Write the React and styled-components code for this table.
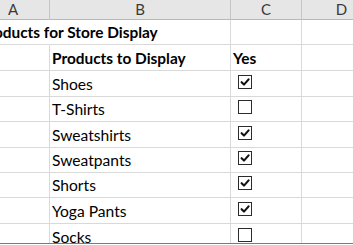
import React from "react";
import styled, { createGlobalStyle } from "styled-components";

const GlobalStyle = createGlobalStyle`
    html, body {
        margin: 0;
        padding: 0;
        background: #ffffff;
    }
    body {
        font-family: Lato, "Open Sans", sans-serif;
    }
`;

const products = [
    { name: "Shoes", shown: true },
    { name: "T-Shirts", shown: false },
    { name: "Sweatshirts", shown: true },
    { name: "Sweatpants", shown: true },
    { name: "Shorts", shown: true },
    { name: "Yoga Pants", shown: true },
    { name: "Socks", shown: false },
];

const rowHeights = [25, 26, 26, 25, 26, 25, 25, 26, 26];

function CheckBox({ checked }) {
    return (
        <Box>
            {checked && (
                <svg width="12" height="12" viewBox="0 0 12 12">
                    <path
                        d="M2.6 6.2 L5 8.6 L9.6 3.4"
                        fill="none"
                        stroke="#111"
                        strokeWidth="2.1"
                        strokeLinecap="round"
                        strokeLinejoin="round"
                    />
                </svg>
            )}
        </Box>
    );
}

export default function App() {
    const rows = [
        { a: "Products for Store Display", title: true },
        { b: "Products to Display", c: "Yes", bold: true },
        ...products.map((p) => ({ b: p.name, check: p.shown })),
    ];

    return (
        <>
            <GlobalStyle />
            <Viewport>
                <Sheet>
                    <HeaderCell>A</HeaderCell>
                    <HeaderCell>B</HeaderCell>
                    <HeaderCell>C</HeaderCell>
                    <HeaderCell $last>D</HeaderCell>
                    {rows.map((row, i) => {
                        const h = rowHeights[i];
                        return (
                            <React.Fragment key={i}>
                                <Cell $h={h} $open={row.title}>
                                    {row.a && <Title>{row.a}</Title>}
                                </Cell>
                                <Cell $h={h} $bold={row.bold}>
                                    {row.b}
                                </Cell>
                                <Cell $h={h} $bold={row.bold}>
                                    {row.c}
                                    {row.check !== undefined && (
                                        <CheckBox checked={row.check} />
                                    )}
                                </Cell>
                                <Cell $h={h} />
                            </React.Fragment>
                        );
                    })}
                </Sheet>
            </Viewport>
        </>
    );
}

const Viewport = styled.div`
    width: 353px;
    height: 243px;
    overflow: hidden;
    border-bottom: 1px solid #7a7a7a;
    margin-bottom: 1px;
`;

const Sheet = styled.div`
    display: grid;
    grid-template-columns: 73px 181px 71px 80px;
    grid-template-rows: 20px;
    margin-left: -23px;
    width: 405px;
`;

const HeaderCell = styled.div`
    box-sizing: border-box;
    height: 20px;
    background: #e6e6e6;
    border-right: 1px solid ${(p) => (p.$last ? "#e6e6e6" : "#c6c6c6")};
    border-bottom: 1px solid #b9b9b9;
    color: #3a3a3a;
    font-size: 15px;
    line-height: 19px;
    text-align: center;
`;

const Cell = styled.div`
    box-sizing: border-box;
    height: ${(p) => p.$h}px;
    display: flex;
    align-items: flex-end;
    padding: 0 0 3px 2px;
    border-right: 1px solid ${(p) => (p.$open ? "transparent" : "#d9d9d9")};
    border-bottom: 1px solid #d9d9d9;
    color: #000;
    font-size: ${(p) => (p.$bold ? 15.4 : 15.6)}px;
    font-weight: ${(p) => (p.$bold ? 700 : 400)};
    line-height: 18px;
    white-space: nowrap;
`;

const Title = styled.span`
    font-size: 15.4px;
    font-weight: 700;
    position: relative;
    z-index: 1;
`;

const Box = styled.span`
    box-sizing: border-box;
    display: flex;
    align-items: center;
    justify-content: center;
    width: 14px;
    height: 14px;
    margin: 0 0 4px 5px;
    border: 1px solid #2b2b2b;
    background: #fff;
`;
